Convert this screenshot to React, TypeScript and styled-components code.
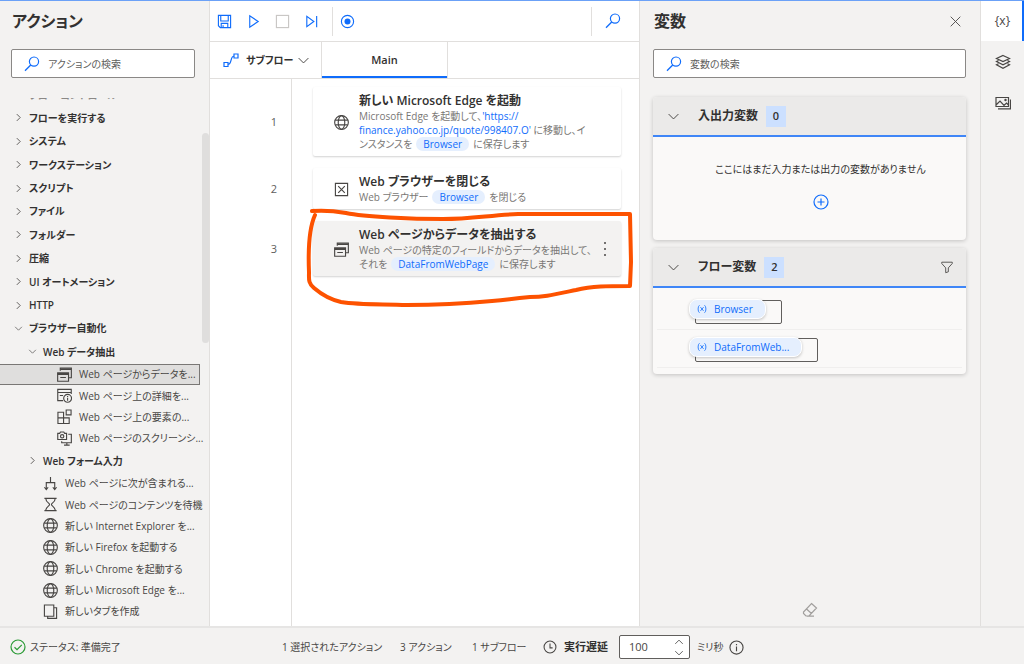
import React from 'react';
import styled, { createGlobalStyle, css } from 'styled-components';

const blue = '#0f6cfb';
const line = '#e1dfdd';
const ink = '#323130';
const soft = '#605e5c';
const panel = '#f3f2f1';

const GlobalStyle = createGlobalStyle`
  * { box-sizing: border-box; }
  html, body, #root { height: 100%; }
  body {
    margin: 0;
    background: ${panel};
    color: ${ink};
    font-family: "Open Sans", "Noto Sans CJK JP", sans-serif;
    font-size: 10px;
    line-height: 14px;
    font-feature-settings: "palt";
  }
  button, input { font: inherit; color: inherit; font-feature-settings: inherit; }
  button { background: none; border: 0; padding: 0; }
  ul, ol { list-style: none; margin: 0; padding: 0; }
  h1, h2, h3, p { margin: 0; }
`;

/* ---------- icons ---------- */

const Svg = styled.svg<{ $size: number; $color?: string }>`
  display: block;
  flex: none;
  width: ${p => p.$size}px;
  height: ${p => p.$size}px;
  fill: none;
  stroke: ${p => p.$color || '#484644'};
  stroke-width: 1.2;
`;

const shapes: Record<string, React.ReactNode> = {
  search: <><circle cx="10" cy="5.6" r="4.6" /><path d="M6.7 9 1 14.8" strokeWidth="1.3" /></>,
  save: <path d="M1.500 1.500h13v13h-11l-2-2z M4 1.500v6h8v-6 M4.500 14.500v-4.500h7v4.500 M6.500 14.500v-2.500" />,
  play: <path d="M4 2v12l9-6z" />,
  stop: <rect x="1.500" y="1.500" width="13" height="13" />,
  step: <path d="M3 2.500v11l7.500-5.500z M13.500 2v12" />,
  record: <><circle cx="8" cy="8" r="6.500" /><circle cx="8" cy="8" r="3.200" fill={blue} stroke="none" /></>,
  subflow: <path d="M1 10.500h4v4H1z M11 2h4v4h-4z M5 12.500c4 0 2-8 6-8.500" />,
  down: <path d="M2 5l6 6 6-6" />,
  right: <path d="M5 2l6 6-6 6" strokeWidth="1.500" />,
  close: <path d="M1 1l14 14M15 1L1 15" strokeWidth="1.300" />,
  globe: <><circle cx="8" cy="8" r="7.300" /><ellipse cx="8" cy="8" rx="3.500" ry="7.300" /><path d="M1.300 5.500h13.400M1.300 10.500h13.400" /></>,
  closeBox: <path d="M1.500 1.500h13v13h-13z M4.500 4.500l7 7M11.500 4.500l-7 7" />,
  extract: <><path d="M.7 6.200h11.600v9H.7z M3.500 11.200h6M3.500 4V1h11.800v10.500h-2.500" /><path d="M.7 7.400h11.600M3.500 2.200h11.800" strokeWidth="2" /></>,
  details: <><path d="M6.500 13.500H.800V1.500h14.400v5M.800 4.800h14.400M3 8h3.500" /><circle cx="11.300" cy="11" r="4.200" /><path d="M11.300 10.500v3M11.300 8.500v1" /></>,
  elements: <path d="M1 3.500h6v6H1z M1 9.500h6v6H1z M7 9.500h6v6H7z M9.800 1h5.200v5.200H9.800z" />,
  screenshot: <><path d="M.800 2.500h2l1-1.500h3.400l1 1.500h2v6.500H.800z M12 3.500h3.300v9H5V11M7.500 15h6M10.500 12.500V15" /><circle cx="5.500" cy="5.600" r="1.800" /></>,
  branch: <path d="M8 1v6M3.500 14V7h9v7M1.500 12l2 2.500 2-2.500M10.500 12l2 2.500 2-2.500" />,
  hourglass: <path d="M1.500 1.500h13M1.500 14.500h13M3 1.500c0 4 4 5 4 6.500s-4 2.500-4 6.500M13 1.500c0 4-4 5-4 6.500s4 2.500 4 6.500" />,
  newTab: <path d="M1.500 1h10v12h-10z M11.500 4h3v11.300H5V13" />,
  plus: <><circle cx="8" cy="8" r="7" /><path d="M8 4.500v7M4.500 8h7" /></>,
  filter: <path d="M2 2.500h12v1.500l-4.500 5v4.500l-3 1V9L2 4z" strokeWidth="1" />,
  layers: <path d="M8 1.500l6.500 3L8 7.500l-6.500-3z M3.500 6.500l-2 1L8 10.800l6.500-3.300-2-1M3.500 9.800l-2 1L8 14.200l6.500-3.400-2-1" />,
  images: <><path d="M1 2.500h12.500v9H1z M3 13.800h12.500V4.500M1.500 9.500L5 6l4 4.500 2.500-2.500 2 2" /><circle cx="10.500" cy="5" r=".6" /></>,
  eraser: <path d="M9.500 1.500l5 4.500-7.500 8H4L1.500 11.500V10z M4.500 7l5 4.500M5 14.200h7" />,
  ok: <><circle cx="8" cy="8" r="7" /><path d="M4.500 8.300l2.500 2.400 4.800-4.900" /></>,
  clock: <><circle cx="8" cy="8" r="6.800" /><path d="M8 4v5h3" /></>,
  info: <><circle cx="8" cy="8" r="7" /><path d="M8 7v5M8 4.200v1.300" /></>,
  more: <g fill="#484644" stroke="none"><circle cx="8" cy="2" r="1" /><circle cx="8" cy="8" r="1" /><circle cx="8" cy="14" r="1" /></g>,
  variable: <path d="M4 2C1 3.500 1 12.500 4 14M12 2c3 1.500 3 10.500 0 12M5.500 5l5 6M10.500 5l-5 6" strokeWidth="1.300" />,
};

const Icon = ({ name, size = 16, color }: { name: string; size?: number; color?: string }) => (
  <Svg viewBox="0 0 16 16" $size={size} $color={color} aria-hidden="true">{shapes[name]}</Svg>
);

/* ---------- frame ---------- */

const Frame = styled.div`
  min-height: 100vh;
  display: grid;
  grid-template-rows: 1fr 38px;
  border-top: 1px solid #6ba1f7;
`;

const Main = styled.div`
  display: grid;
  grid-template-columns: 210px minmax(0, 1fr) 342px 43px;
  min-height: 0;
`;

const SidePanel = styled.aside`
  display: flex;
  flex-direction: column;
  min-width: 0;
  border-right: 1px solid ${line};
`;

const DesignerSide = styled(SidePanel)`
  border-left: 1px solid ${line};
`;

const PanelHead = styled.header<{ $right?: boolean }>`
  display: flex;
  align-items: center;
  justify-content: space-between;
  height: 40px;
  padding: ${p => (p.$right ? '0 19px 0 14px' : '0 12px')};
`;

const PanelTitle = styled.h1`
  font-size: 16px;
  line-height: 24px;
  font-weight: 600;
`;

const SearchBox = styled.label<{ $left: number }>`
  display: flex;
  align-items: center;
  gap: 8px;
  height: 29px;
  margin: 8px 14px 0 ${p => p.$left}px;
  padding: 0 12px;
  background: #fff;
  border: 1px solid #8a8886;
  border-radius: 2px;
  input {
    flex: 1;
    min-width: 0;
    border: 0;
    outline: 0;
    padding: 0;
    background: none;
  }
  input::placeholder { color: ${soft}; opacity: 1; }
`;

/* ---------- action tree ---------- */

const TreeArea = styled.div`
  display: flex;
  flex: 1;
  margin-top: 20px;
  padding-bottom: 4px;
`;

const Tree = styled.ul`
  flex: 1;
  min-width: 0;
  display: flex;
  flex-direction: column;
  justify-content: space-between;
`;

const ScrolledRow = styled.li`
  display: flex;
  align-items: flex-end;
  height: 4px;
  overflow: hidden;
  padding-left: 29px;
  font-weight: 600;
  color: #8a8886;
  margin-bottom: 4px;
`;

const TreeRow = styled.li<{ $level: number; $group?: boolean; $selected?: boolean }>`
  display: flex;
  align-items: center;
  gap: ${p => (p.$group ? 6 : 7)}px;
  height: ${p => (p.$group ? 23 : 21)}px;
  padding-left: ${p => (p.$group ? 13 : 28) + p.$level * 14}px;
  white-space: nowrap;
  color: ${p => (p.$group ? ink : '#484644')};
  font-weight: ${p => (p.$group ? 600 : 400)};
  border: 1px solid transparent;
  ${p => p.$selected && css`
    background: #dfdedd;
    border-color: #797775;
    border-left: 0;
    padding-left: ${29 + p.$level * 14}px;
  `}
`;

const ScrollThumb = styled.div`
  width: 7px;
  height: 210px;
  margin: 35px 0 0 2px;
  border-radius: 4px;
  background: #dfdedd;
`;

type Node = { text: string; level: number; icon?: string; open?: boolean; selected?: boolean };
const tree: Node[] = [
  { text: 'フローを実行する', level: 0 },
  { text: 'システム', level: 0 },
  { text: 'ワークステーション', level: 0 },
  { text: 'スクリプト', level: 0 },
  { text: 'ファイル', level: 0 },
  { text: 'フォルダー', level: 0 },
  { text: '圧縮', level: 0 },
  { text: 'UI オートメーション', level: 0 },
  { text: 'HTTP', level: 0 },
  { text: 'ブラウザー自動化', level: 0, open: true },
  { text: 'Web データ抽出', level: 1, open: true },
  { text: 'Web ページからデータを...', level: 2, icon: 'extract', selected: true },
  { text: 'Web ページ上の詳細を...', level: 2, icon: 'details' },
  { text: 'Web ページ上の要素の...', level: 2, icon: 'elements' },
  { text: 'Web ページのスクリーンシ...', level: 2, icon: 'screenshot' },
  { text: 'Web フォーム入力', level: 1 },
  { text: 'Web ページに次が含まれる...', level: 1, icon: 'branch' },
  { text: 'Web ページのコンテンツを待機', level: 1, icon: 'hourglass' },
  { text: '新しい Internet Explorer を...', level: 1, icon: 'globe' },
  { text: '新しい Firefox を起動する', level: 1, icon: 'globe' },
  { text: '新しい Chrome を起動する', level: 1, icon: 'globe' },
  { text: '新しい Microsoft Edge を...', level: 1, icon: 'globe' },
  { text: '新しいタブを作成', level: 1, icon: 'newTab' },
];

/* ---------- designer ---------- */

const Designer = styled.main`
  display: flex;
  flex-direction: column;
  min-width: 0;
  background: #fff;
`;

const Toolbar = styled.div`
  display: flex;
  align-items: center;
  height: 41px;
  border-bottom: 1px solid ${line};
`;

const ToolButton = styled.button<{ $wide?: boolean }>`
  display: grid;
  place-items: center;
  width: ${p => (p.$wide ? 41 : 29)}px;
  height: 32px;
`;

const Separator = styled.span<{ $push?: boolean }>`
  width: 1px;
  height: 29px;
  background: ${line};
  margin-left: ${p => (p.$push ? 'auto' : '6px')};
  & + button { margin-right: ${p => (p.$push ? 6 : 0)}px; }
`;

const Tabs = styled.div`
  display: flex;
  height: 37px;
  font-size: 11px;
  border-bottom: 1px solid ${line};
`;

const SubflowButton = styled.button`
  display: flex;
  align-items: center;
  justify-content: space-between;
  width: 112px;
  padding: 0 11px 0 13px;
  border-right: 1px solid ${line};
  font-size: 10px;
  font-weight: 600;
  white-space: nowrap;
  span { display: flex; align-items: center; gap: 7px; }
`;

const Tab = styled.button`
  width: 126px;
  border-right: 1px solid ${line};
  box-shadow: inset 0 -2px ${blue};
  font-weight: 600;
`;

const Workspace = styled.div`
  position: relative;
  flex: 1;
  background: linear-gradient(${line}, ${line}) 81px 0 / 1px 100% no-repeat;
`;

const Steps = styled.ol`
  display: grid;
  gap: 12px;
  padding: 8px 18px 0 0;
`;

const Step = styled.li`
  display: grid;
  grid-template-columns: 67px minmax(0, 1fr);
  column-gap: 36px;
  align-items: center;
`;

const StepNumber = styled.span`
  text-align: right;
  font-size: 11px;
  color: ${soft};
`;

const StepCard = styled.article<{ $active?: boolean }>`
  display: grid;
  grid-template-columns: 16px minmax(0, 1fr) 16px;
  column-gap: 9px;
  align-items: center;
  padding: 6px 8px 5px 21px;
  border-radius: 2px;
  background: ${p => (p.$active ? panel : '#fff')};
  box-shadow: 0 1px 2px rgba(0, 0, 0, 0.18);
  white-space: nowrap;
`;

const StepTitle = styled.h2`
  font-size: 12px;
  line-height: 16px;
  font-weight: 600;
`;

const StepText = styled.p`
  color: #797775;
  a { color: ${blue}; text-decoration: none; }
`;

const Token = styled.span`
  display: inline-block;
  margin: 0 4px;
  padding: 0 7px;
  border-radius: 7px;
  background: #e5effe;
  color: ${blue};
`;

const Annotation = styled.svg`
  position: absolute;
  left: 92px;
  top: 124px;
  width: 338px;
  height: 110px;
  fill: none;
  stroke: #fd5200;
  stroke-width: 4;
  stroke-linecap: round;
  stroke-linejoin: round;
  pointer-events: none;
`;

/* ---------- variables ---------- */

const VarCard = styled.section`
  margin: 19px 14px 0 13px;
  border-radius: 4px;
  background: #faf9f8;
  box-shadow: 0 1px 4px rgba(0, 0, 0, 0.2);
  & + & { margin-top: 8px; }
`;

const VarHead = styled.header`
  display: flex;
  align-items: center;
  height: 40px;
  padding: 0 12px 0 14px;
  background: #ebeae9;
  border-bottom: 2px solid #3f86f7;
  border-radius: 4px 4px 0 0;
  h2 { font-size: 12px; line-height: 16px; font-weight: 600; margin-left: 18px; }
  button:last-child { margin-left: auto; }
`;

const Count = styled.span`
  display: grid;
  place-items: center;
  width: 20px;
  height: 21px;
  margin-left: 8px;
  margin-right: auto;
  background: #cce0ff;
  font-size: 11px;
  font-weight: 600;
`;

const Empty = styled.div`
  display: flex;
  flex-direction: column;
  align-items: center;
  gap: 18px;
  height: 103px;
  padding: 25px 0 0 22px;
`;

const VarList = styled.ul`
  padding: 4px 4px 6px;
`;

const VarRow = styled.li`
  display: flex;
  height: 38px;
  padding: 7px 0 0 32px;
  border-bottom: 1px solid #f0efee;
`;

const VarButton = styled.button`
  display: grid;
  height: 25px;
`;

const VarOutline = styled.span`
  grid-area: 1 / 1;
  margin: 1px 0 0 6px;
  border: 1px solid ${soft};
  border-radius: 2px;
`;

const VarChip = styled.span`
  grid-area: 1 / 1;
  display: flex;
  align-items: center;
  gap: 7px;
  height: 20px;
  margin-right: 16px;
  padding: 0 12px 0 7px;
  border: 1px solid #fff;
  border-radius: 8px;
  background: #e5effe;
  color: ${blue};
  box-shadow: 0 1px 3px rgba(0, 0, 0, 0.22);
`;

const Clear = styled.button`
  margin: auto auto 8px;
`;

const Rail = styled.nav`
  display: flex;
  flex-direction: column;
`;

const RailButton = styled.button<{ $active?: boolean }>`
  display: grid;
  place-items: center;
  height: ${p => (p.$active ? 40 : 41)}px;
  color: #484644;
  font-size: 12px;
  background: ${p => (p.$active ? '#fff' : 'transparent')};
  box-shadow: ${p => (p.$active ? `inset -2px 0 ${blue}` : 'none')};
`;

/* ---------- status bar ---------- */

const Status = styled.footer`
  display: flex;
  align-items: center;
  padding: 2px 12px 0 10px;
  border-top: 2px solid #e6e5e4;
  color: #484644;
  white-space: nowrap;
`;

const StatusItem = styled.span<{ $width: number }>`
  display: flex;
  align-items: center;
  gap: 4px;
  width: ${p => p.$width}px;
`;

const Delay = styled.label`
  display: flex;
  align-items: center;
  justify-content: space-between;
  width: 65px;
  margin-right: 11px;
  font-size: 11px;
  font-weight: 600;
  color: ${ink};
`;

const Spinner = styled.div`
  display: flex;
  align-items: center;
  width: 71px;
  height: 24px;
  margin-right: 7px;
  padding: 0 5px 0 9px;
  background: #fff;
  border: 1px solid ${soft};
  border-radius: 2px;
  font-size: 11px;
  input { flex: 1; min-width: 0; border: 0; outline: 0; padding: 0; background: none; }
  div { display: grid; gap: 1px; }
`;

const Flip = styled.span`
  display: block;
  transform: rotate(180deg);
`;

const steps = [
  {
    icon: 'globe',
    title: '新しい Microsoft Edge を起動',
    body: (
      <>
        Microsoft Edge を起動して、<a href="#url">'https://<br />finance.yahoo.co.jp/quote/998407.O'</a> に移動し、イ<br />
        ンスタンスを<Token>Browser</Token>に保存します
      </>
    ),
  },
  {
    icon: 'closeBox',
    title: 'Web ブラウザーを閉じる',
    body: <>Web ブラウザー<Token>Browser</Token>を閉じる</>,
  },
  {
    icon: 'extract',
    title: 'Web ページからデータを抽出する',
    active: true,
    body: (
      <>
        Web ページの特定のフィールドからデータを抽出して、<br />
        それを<Token>DataFromWebPage</Token>に保存します
      </>
    ),
  },
];

export default function App() {
  return (
    <>
      <GlobalStyle />
      <Frame>
        <Main>
          <SidePanel>
            <PanelHead><PanelTitle>アクション</PanelTitle></PanelHead>
            <SearchBox $left={11}>
              <Icon name="search" color={blue} />
              <input type="search" placeholder="アクションの検索" aria-label="アクションの検索" />
            </SearchBox>
            <TreeArea>
              <Tree>
                <ScrolledRow>フロー コントロール</ScrolledRow>
                {tree.map(n => (
                  <TreeRow key={n.text} $level={n.level} $group={!n.icon} $selected={n.selected}>
                    {n.icon
                      ? <Icon name={n.icon} size={15} />
                      : <Icon name={n.open ? 'down' : 'right'} size={9} />}
                    {n.text}
                  </TreeRow>
                ))}
              </Tree>
              <ScrollThumb />
            </TreeArea>
          </SidePanel>

          <Designer>
            <Toolbar>
              <ToolButton aria-label="保存"><Icon name="save" size={15} color={blue} /></ToolButton>
              <ToolButton aria-label="実行"><Icon name="play" size={15} color={blue} /></ToolButton>
              <ToolButton aria-label="停止" disabled><Icon name="stop" size={15} color="#c8c6c4" /></ToolButton>
              <ToolButton aria-label="次のアクションを実行"><Icon name="step" size={15} color={blue} /></ToolButton>
              <Separator />
              <ToolButton aria-label="レコーダー"><Icon name="record" size={15} color={blue} /></ToolButton>
              <Separator $push />
              <ToolButton $wide aria-label="検索"><Icon name="search" color={blue} /></ToolButton>
            </Toolbar>
            <Tabs>
              <SubflowButton>
                <span><Icon name="subflow" color={blue} />サブフロー</span>
                <Icon name="down" size={13} />
              </SubflowButton>
              <Tab>Main</Tab>
            </Tabs>
            <Workspace>
              <Steps>
                {steps.map((s, i) => (
                  <Step key={s.title}>
                    <StepNumber>{i + 1}</StepNumber>
                    <StepCard $active={s.active}>
                      <Icon name={s.icon} size={15} />
                      <div>
                        <StepTitle>{s.title}</StepTitle>
                        <StepText>{s.body}</StepText>
                      </div>
                      {s.active && <button aria-label="その他"><Icon name="more" /></button>}
                    </StepCard>
                  </Step>
                ))}
              </Steps>
              <Annotation viewBox="302 203 338 110" aria-hidden="true">
                <path d="M312 211C324 210 335 211 346 213C365 217 412 219 443 219C472 219 490 215 518 214H630L631 262L630 286C608 286 592 286 576 290C552 295 544 297 530 297C508 299 508 300 492 301C460 304 430 305 407 305C380 304 360 305 341 302C328 299 321 294 314 288C308 283 309 279 309 272C308 248 310 226 315 215" />
              </Annotation>
            </Workspace>
          </Designer>

          <DesignerSide>
            <PanelHead $right>
              <PanelTitle>変数</PanelTitle>
              <button aria-label="閉じる"><Icon name="close" size={11} /></button>
            </PanelHead>
            <SearchBox $left={13}>
              <Icon name="search" color={blue} />
              <input type="search" placeholder="変数の検索" aria-label="変数の検索" />
            </SearchBox>
            <VarCard>
              <VarHead>
                <button aria-label="折りたたむ"><Icon name="down" size={13} /></button>
                <h2>入出力変数</h2>
                <Count>0</Count>
              </VarHead>
              <Empty>
                <p>ここにはまだ入力または出力の変数がありません</p>
                <button aria-label="変数を追加"><Icon name="plus" color={blue} /></button>
              </Empty>
            </VarCard>
            <VarCard>
              <VarHead>
                <button aria-label="折りたたむ"><Icon name="down" size={13} /></button>
                <h2>フロー変数</h2>
                <Count>2</Count>
                <button aria-label="フィルター"><Icon name="filter" size={14} /></button>
              </VarHead>
              <VarList>
                {['Browser', 'DataFromWeb...'].map(v => (
                  <VarRow key={v}>
                    <VarButton>
                      <VarOutline />
                      <VarChip><Icon name="variable" size={10} color={blue} />{v}</VarChip>
                    </VarButton>
                  </VarRow>
                ))}
              </VarList>
            </VarCard>
            <Clear aria-label="クリア"><Icon name="eraser" color="#a19f9d" /></Clear>
          </DesignerSide>

          <Rail>
            <RailButton $active aria-label="変数">{'{x}'}</RailButton>
            <RailButton aria-label="UI 要素"><Icon name="layers" /></RailButton>
            <RailButton aria-label="画像"><Icon name="images" /></RailButton>
          </Rail>
        </Main>

        <Status>
          <StatusItem $width={272}><Icon name="ok" color="#2a9a35" />ステータス: 準備完了</StatusItem>
          <StatusItem $width={118}>1 選択されたアクション</StatusItem>
          <StatusItem $width={72}>3 アクション</StatusItem>
          <StatusItem $width={71}>1 サブフロー</StatusItem>
          <Delay htmlFor="delay"><Icon name="clock" size={14} />実行遅延</Delay>
          <Spinner>
            <input id="delay" defaultValue="100" />
            <div>
              <button aria-label="増やす"><Flip><Icon name="down" size={10} color={ink} /></Flip></button>
              <button aria-label="減らす"><Icon name="down" size={10} color={ink} /></button>
            </div>
          </Spinner>
          <StatusItem $width={32}>ミリ秒</StatusItem>
          <Icon name="info" size={15} />
        </Status>
      </Frame>
    </>
  );
}
